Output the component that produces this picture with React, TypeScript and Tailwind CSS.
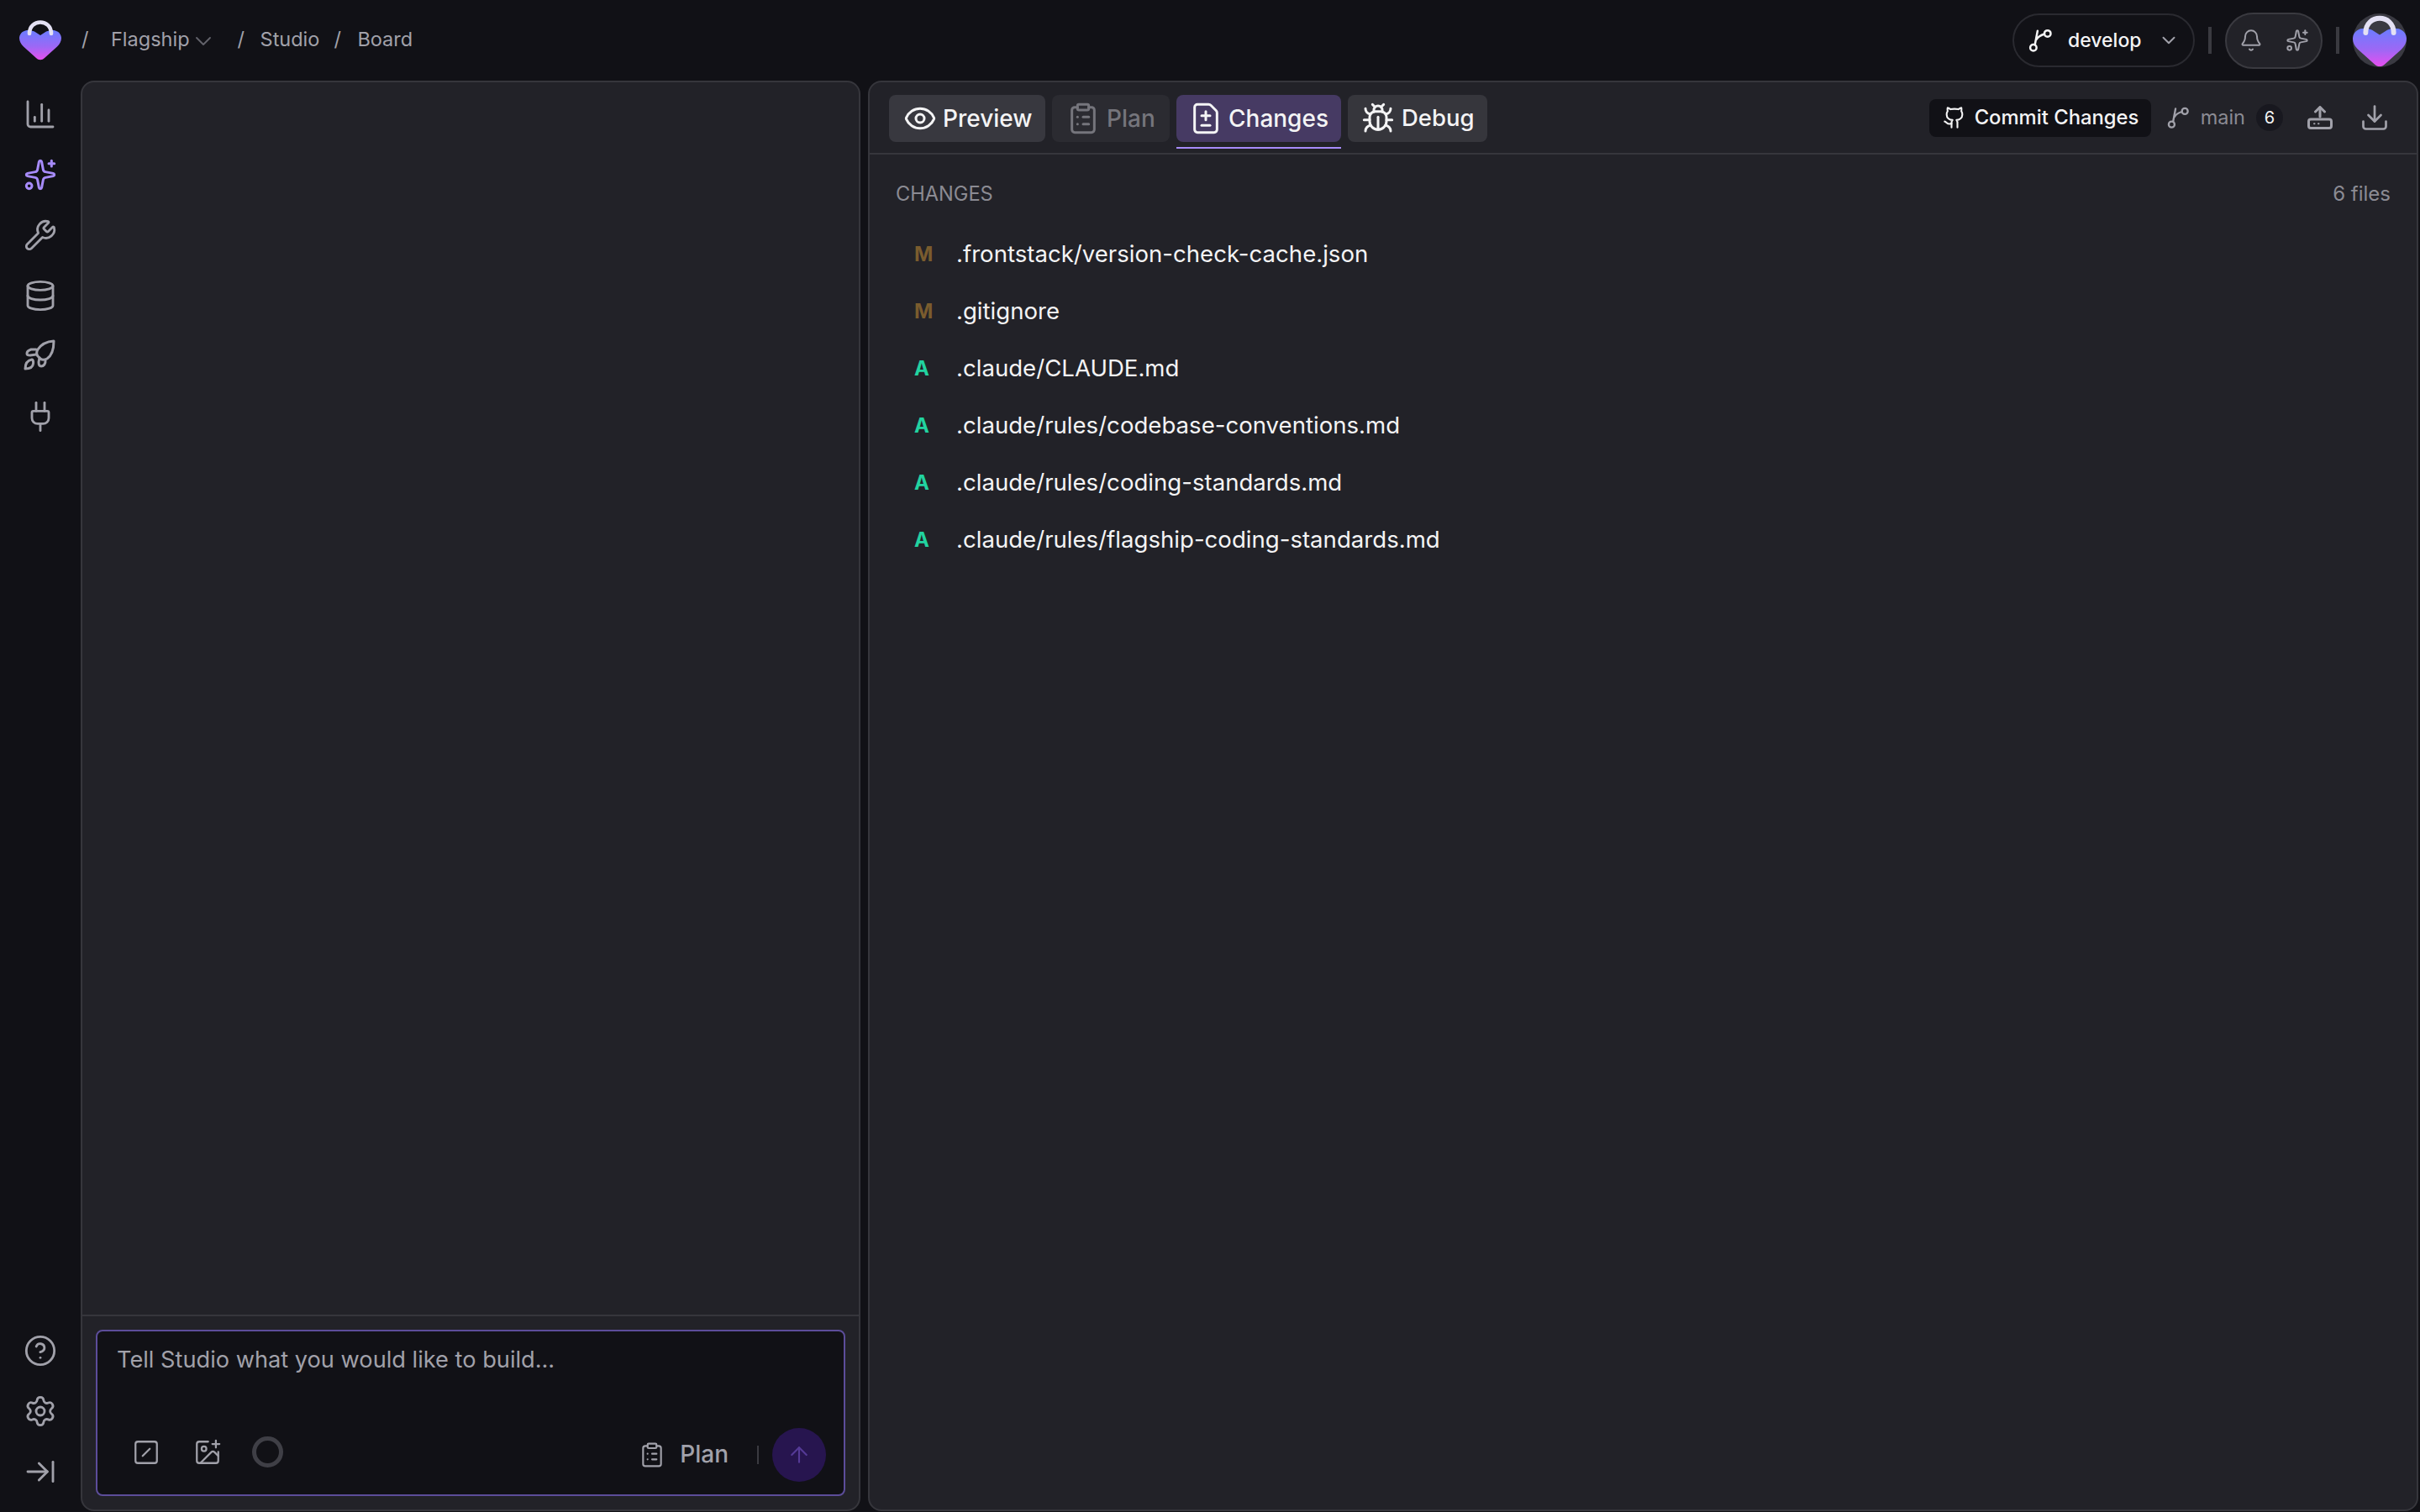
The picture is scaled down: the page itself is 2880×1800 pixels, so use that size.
import React from "react";
import {
  ChartColumn, Sparkles, Wrench, Database, Plug, CircleHelp, Settings, ArrowRightToLine,
  ChevronDown, Bell, Eye, ClipboardList, FileDiff, Bug, Github, Download, SquareSlash, ImagePlus, ArrowUp,
} from "lucide-react";

function Logo({ size, id }: { size: number; id: string }) {
  return (
    <svg width={size} height={size} viewBox="0 0 50 50" fill="none">
      <defs>
        <linearGradient id={id} x1="0" y1="0" x2="0" y2="1">
          <stop offset="0" stopColor="#6a7dff" />
          <stop offset="0.55" stopColor="#9c68f5" />
          <stop offset="1" stopColor="#e74ff0" />
        </linearGradient>
      </defs>
      <path
        d="M25 20 L18 15.500 C12 12.500 1 13 0 23 C0 27.500 2 30.500 5 33.500 L20 47 C23 50 27 50 30 47 L45 33.500 C48 30.500 50 27.500 50 23 C49 13 38 12.500 32 15.500 Z"
        fill={`url(#${id})`}
      />
      <path d="M12 18 C12 0 38 0 38 18" stroke="#e4e1f4" strokeWidth="4.6" strokeLinecap="round" />
    </svg>
  );
}

function BranchIcon({ size, className }: { size: number; className: string }) {
  return (
    <svg width={size} height={size} viewBox="0 0 24 24" fill="none" stroke="currentColor" strokeWidth="2" strokeLinecap="round" className={className}>
      <circle cx="5.5" cy="19" r="3" />
      <circle cx="19" cy="5.5" r="3" />
      <path d="M7 16 L9.5 3" />
      <path d="M8.5 11 C10 8.5 13 7 16 6" />
    </svg>
  );
}

function RocketIcon() {
  return (
    <svg width="60" height="70" viewBox="0 0 60 70" fill="none" stroke="#a1a1aa" strokeWidth="3" strokeLinejoin="round" strokeLinecap="round">
      <path d="M46 17 C38 17.500 31 21 27 27 C25.500 29.500 25.500 33 27 35 L30 38 C32 39.500 35 39.500 38 38 C44 34 46 26 46 17Z" />
      <path d="M25 27 L19 27 C16 28 14 30 14 32 C14 34 16 34 18 34 L25 33" />
      <path d="M36 40 C36.500 44 34 47 31 47 C28.500 47 28 44 28 42 L29 37" />
      <path d="M20 39 C15 40 12 44 12 50 C17 50 21 48 21.500 44 C22 41 21 39 20 39Z" />
    </svg>
  );
}

function UploadTray() {
  return (
    <svg width="30" height="28" viewBox="0 0 30 28" fill="none" stroke="#a1a1aa" strokeWidth="3" strokeLinecap="round" strokeLinejoin="round">
      <path d="M15 2v11" />
      <path d="M9.500 7 15 1.500 20.500 7" />
      <rect x="1.500" y="16" width="27" height="10.500" rx="2.500" />
      <path d="M8 21.300h.5M13 21.300h.5" strokeWidth="2" />
    </svg>
  );
}

function Side({ children }: { children: React.ReactNode }) {
  return <div className="h-[72px] flex items-center justify-center">{children}</div>;
}

const files: [string, string][] = [
  ["M", ".frontstack/version-check-cache.json"],
  ["M", ".gitignore"],
  ["A", ".claude/CLAUDE.md"],
  ["A", ".claude/rules/codebase-conventions.md"],
  ["A", ".claude/rules/coding-standards.md"],
  ["A", ".claude/rules/flagship-coding-standards.md"],
];

export default function App() {
  return (
    <div className="w-[2880px] h-[1800px] flex flex-col bg-[#111116] overflow-hidden font-['Inter',sans-serif] text-[#f4f4f5]">
      {/* top bar */}
      <header className="h-[96px] shrink-0 flex items-center pl-[23px] pr-[16px]">
        <div className="mt-[-2px]"><Logo size={50} id="logoA" /></div>
        <div className="flex items-center text-[23.500px] text-[#a1a1aa] ml-[24px] mt-[-2px]">
          <span className="w-[35px]">/</span>
          <span>Flagship</span>
          <ChevronDown size={32} strokeWidth={1.4} className="text-[#63636b] mt-[3px]" />
          <span className="ml-[25px] w-[27px]">/</span>
          <span>Studio</span>
          <span className="ml-[17px] w-[28px]">/</span>
          <span>Board</span>
        </div>
        <div className="ml-auto flex items-center">
          <div className="w-[217px] h-[64px] rounded-full border-2 border-[#2a2a30] flex items-center pl-[16px] mr-[16px]">
            <BranchIcon size={30} className="text-[#f4f4f5]" />
            <span className="ml-[18px] text-[23px] font-medium">develop</span>
            <ChevronDown size={26} strokeWidth={1.8} className="ml-[19px] text-[#a1a1aa]" />
          </div>
          <div className="w-[4px] h-[32px] bg-[#3a3a40]" />
          <div className="w-[116px] h-[67px] ml-[16px] mr-[16px] rounded-full bg-[#222228] border-2 border-[#3a3a40] flex items-center justify-center gap-[27px]">
            <Bell size={28} strokeWidth={1.7} className="text-[#a1a1aa]" />
            <Sparkles size={28} strokeWidth={1.7} className="text-[#a1a1aa]" />
          </div>
          <div className="w-[4px] h-[32px] bg-[#3a3a40]" />
          <div className="w-[64px] h-[64px] ml-[16px] rounded-full bg-[#3a3a42] flex items-center justify-center">
            <Logo size={64} id="logoB" />
          </div>
        </div>
      </header>

      <div className="flex-1 flex min-h-0">
        {/* sidebar */}
        <aside className="w-[96px] shrink-0 flex flex-col justify-between pt-[4px] pb-[12px] text-[#a1a1aa]">
          <div>
            <Side><ChartColumn size={40} strokeWidth={1.7} /></Side>
            <Side><Sparkles size={40} strokeWidth={1.8} className="text-[#a78bfa]" /></Side>
            <Side><Wrench size={40} strokeWidth={1.7} /></Side>
            <Side><Database size={40} strokeWidth={1.7} /></Side>
            <Side><RocketIcon /></Side>
            <Side><Plug size={40} strokeWidth={1.7} /></Side>
          </div>
          <div>
            <Side><CircleHelp size={40} strokeWidth={1.7} /></Side>
            <Side><Settings size={40} strokeWidth={1.7} /></Side>
            <Side><ArrowRightToLine size={40} strokeWidth={1.7} /></Side>
          </div>
        </aside>

        {/* left panel */}
        <section className="w-[928px] shrink-0 mb-[1px] bg-[#222228] border-2 border-[#36363c] rounded-[16px] flex flex-col">
          <div className="flex-1" />
          <div className="border-t-2 border-[#36363c] px-[16px] pt-[16px] pb-[16px]">
            <div className="h-[198px] rounded-[8px] border-2 border-[#5c4d9a] bg-[#111116] flex flex-col justify-between">
              <div className="pl-[23px] pt-[18px] text-[27.200px] leading-[32px] text-[#a1a1aa]">Tell Studio what you would like to build...</div>
              <div className="flex items-center pl-[41px] pr-[21px] pb-[15px]">
                <div className="flex items-center mb-[7px] text-[#a1a1aa]">
                  <SquareSlash size={34} strokeWidth={1.6} />
                  <ImagePlus size={34} strokeWidth={1.6} className="ml-[39px]" />
                  <div className="ml-[36px] w-[37px] h-[37px] rounded-full border-[5px] border-[#3f3f46]" />
                </div>
                <div className="ml-auto flex items-center">
                  <ClipboardList size={32} strokeWidth={1.6} className="text-[#a1a1aa]" />
                  <span className="ml-[17px] mb-[2px] text-[28px] font-medium text-[#a1a1aa]">Plan</span>
                  <div className="ml-[34px] w-[2px] h-[22px] bg-[#3a3a40]" />
                  <div className="ml-[16px] w-[64px] h-[64px] rounded-full bg-[#27154f] flex items-center justify-center">
                    <ArrowUp size={30} strokeWidth={1.7} className="text-[#553a96]" />
                  </div>
                </div>
              </div>
            </div>
          </div>
        </section>

        {/* right panel */}
        <section className="flex-1 ml-[9px] mr-[2px] mb-[1px] bg-[#222228] border-2 border-[#36363c] rounded-[16px] flex flex-col min-w-0">
          <div className="h-[86px] shrink-0 border-b-2 border-[#36363c] flex pl-[23px] pr-[32px]">
            <div className="flex gap-[8px] pt-[15px]">
              <div className="h-[56px] w-[186px] rounded-[8px] bg-[#38383f] flex items-center pl-[17px] text-[28px] font-medium">
                <Eye size={40} strokeWidth={1.8} />
                <span className="ml-[7px]">Preview</span>
              </div>
              <div className="h-[56px] w-[140px] rounded-[8px] bg-[#2b2b31] flex items-center pl-[17px] text-[28px] font-medium text-[#75757c]">
                <ClipboardList size={40} strokeWidth={1.8} />
                <span className="ml-[8px]">Plan</span>
              </div>
              <div className="w-[196px] flex flex-col">
                <div className="h-[56px] rounded-[8px] bg-[#463a63] flex items-center pl-[15px] text-[28px] font-medium">
                  <FileDiff size={40} strokeWidth={1.8} />
                  <span className="ml-[7px]">Changes</span>
                </div>
                <div className="mt-[6px] h-[2px] bg-[#a78bfa]" />
              </div>
              <div className="h-[56px] w-[166px] rounded-[8px] bg-[#36363c] flex items-center pl-[16px] text-[27.500px] font-medium">
                <Bug size={40} strokeWidth={1.8} />
                <span className="ml-[8px]">Debug</span>
              </div>
            </div>
            <div className="ml-auto flex items-center">
              <div className="h-[45px] w-[264px] rounded-[8px] bg-[#111116] flex items-center pl-[16px] text-[23.800px] font-medium">
                <Github size={28} strokeWidth={1.8} />
                <span className="ml-[10px]">Commit Changes</span>
              </div>
              <BranchIcon size={28} className="ml-[18px] text-[#a1a1aa]" />
              <span className="ml-[13px] text-[23.500px] text-[#8b8b93]">main</span>
              <div className="ml-[13px] w-[32px] h-[32px] rounded-full bg-[#18181f] flex items-center justify-center text-[20px]">6</div>
              <div className="ml-[29px]"><UploadTray /></div>
              <Download size={36} strokeWidth={1.8} className="ml-[32px] text-[#a1a1aa]" />
            </div>
          </div>
          <div className="flex-1 min-h-0">
            <div className="h-[85px] pt-[8px] pl-[31px] pr-[31px] flex items-center justify-between text-[#8b8b93] text-[24px]">
              <span className="text-[23.600px]">CHANGES</span>
              <span>6 files</span>
            </div>
            {files.map(([status, name]) => (
              <div key={name} className="h-[68px] flex items-center pl-[53px]">
                <span className={status === "M" ? "w-[50px] text-[24px] font-bold text-[#7a5c2e]" : "w-[50px] text-[24px] font-bold text-[#22d3a0]"}>{status}</span>
                <span className="text-[27.600px] text-[#f4f4f5]">{name}</span>
              </div>
            ))}
          </div>
        </section>
      </div>
    </div>
  );
}
